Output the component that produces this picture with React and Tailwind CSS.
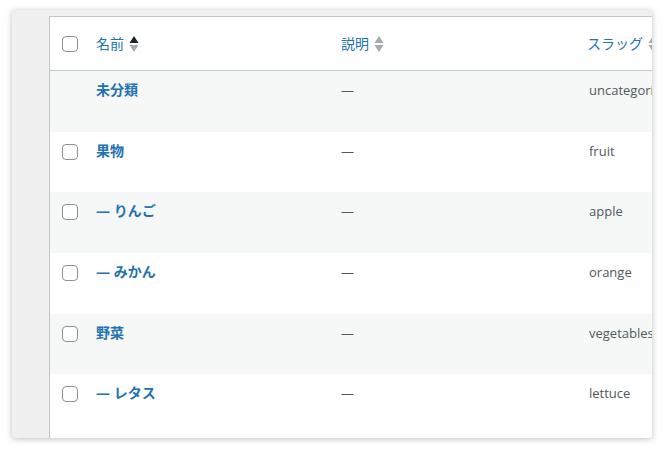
import React from 'react';

const rows = [
  { name: '未分類', slug: 'uncategorized', noCheck: true },
  { name: '果物', slug: 'fruit' },
  { name: '— りんご', slug: 'apple' },
  { name: '— みかん', slug: 'orange' },
  { name: '野菜', slug: 'vegetables' },
  { name: '— レタス', slug: 'lettuce' },
];

const font = { fontFamily: '"Open Sans", "Noto Sans CJK JP", sans-serif' };

function SortArrows({ active = false }) {
  return (
    <svg width="10" height="18" viewBox="0 0 10 18" className="ml-[5px] shrink-0">
      <path d="M5 1 L9.5 8 L0.5 8 Z" fill={active ? '#1d2327' : '#a7aaad'} />
      <path d="M5 17 L9.5 10 L0.5 10 Z" fill="#a7aaad" />
    </svg>
  );
}

function Checkbox() {
  return <div className="w-4 h-4 rounded-[4px] border border-[#8c8f94] bg-white" />;
}

export default function App() {
  return (
    <div className="w-[664px] h-[451px] bg-white pt-[10px] pl-[12px]" style={font}>
      <div className="w-[640px] h-[428px] bg-[#f0f0f1] rounded-[4px] overflow-hidden shadow-[0_1px_6px_rgba(0,0,0,0.25)] pt-[6px] pl-[37px]">
        <div className="w-[720px] h-full bg-white border-l border-t border-[#c3c4c7]">
          {/* header */}
          <div className="grid grid-cols-[38px_245px_248px_1fr] h-[54px] border-b border-[#c3c4c7] items-center">
            <div className="pl-[12px] flex items-center">
              <Checkbox />
            </div>
            <div className="pl-[8px] flex items-center text-[14px] text-[#2271b1]">
              名前
              <SortArrows active />
            </div>
            <div className="pl-[8px] flex items-center text-[14px] text-[#2271b1]">
              説明
              <SortArrows />
            </div>
            <div className="pl-[6px] flex items-center text-[14px] text-[#2271b1]">
              スラッグ
              <SortArrows />
            </div>
          </div>
          {rows.map((r, i) => (
            <div
              key={r.slug}
              className={`grid grid-cols-[38px_245px_248px_1fr] h-[60.7px] items-start ${i % 2 === 0 ? 'bg-[#f6f7f7]' : 'bg-white'}`}
            >
              <div className="pl-[12px] pt-[12px]">
                {!r.noCheck && <Checkbox />}
              </div>
              <div className="pl-[8px] pt-[8px] text-[14px] leading-[21px] font-bold text-[#2271b1]">{r.name}</div>
              <div className="pl-[8px] pt-[9px] text-[13px] leading-[21px] text-[#50575e]">—</div>
              <div className="pl-[8px] pt-[9px] text-[13px] leading-[21px] text-[#50575e] whitespace-nowrap">{r.slug}</div>
            </div>
          ))}
        </div>
      </div>
    </div>
  );
}
